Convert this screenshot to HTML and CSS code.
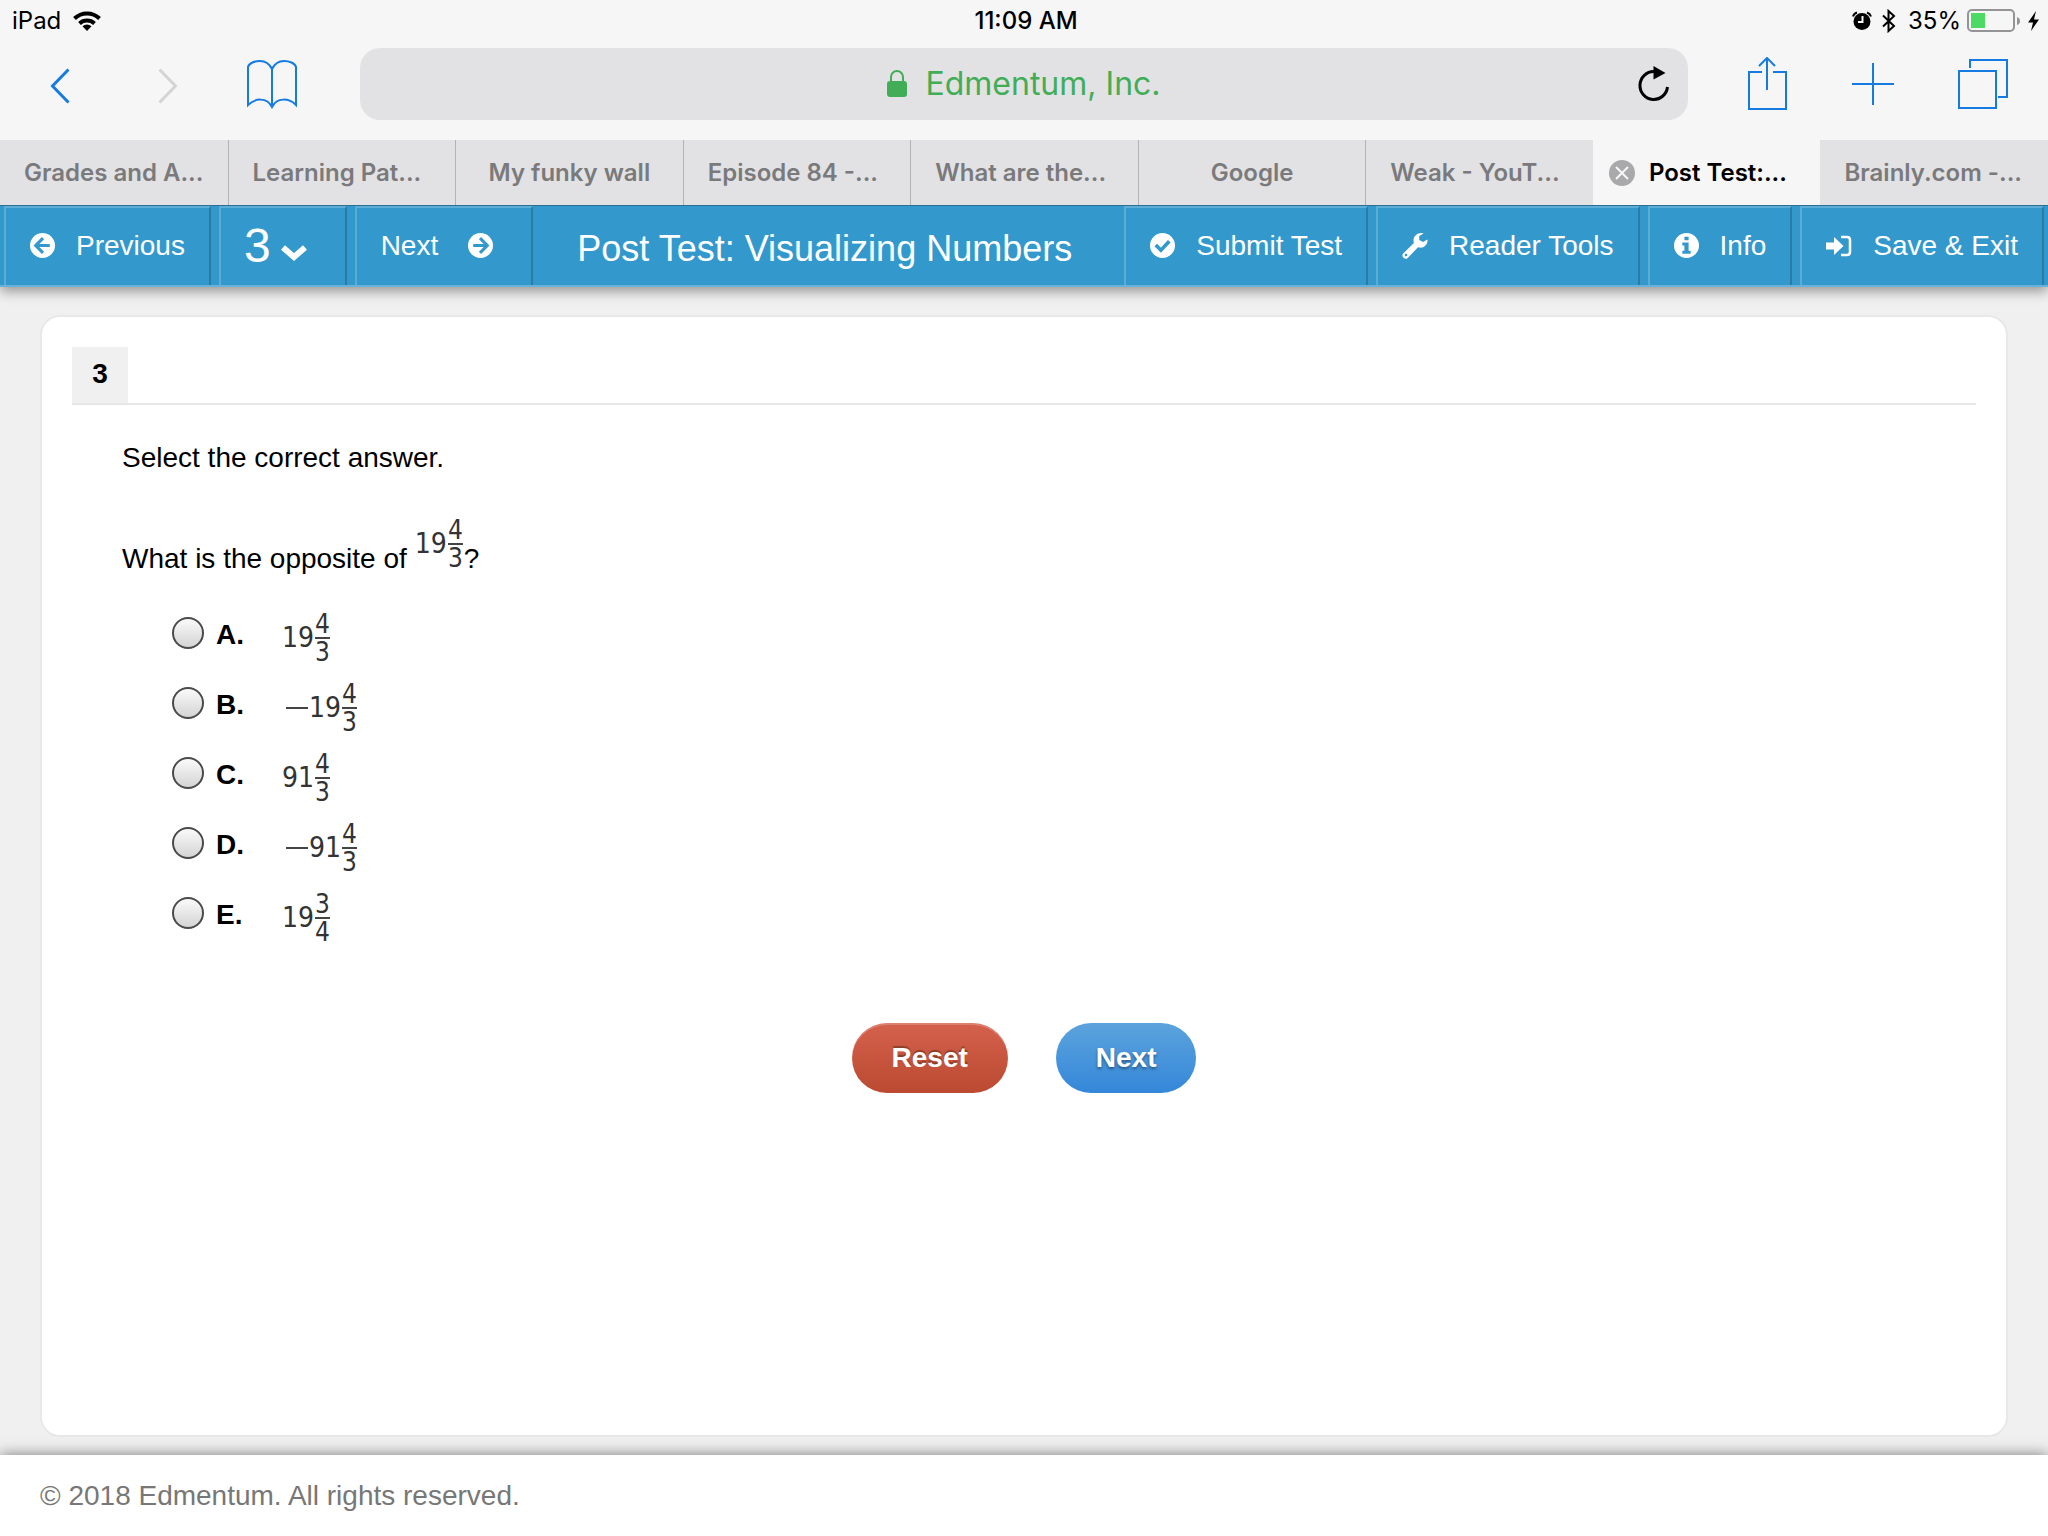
FILE: index.html
```html
<!DOCTYPE html>
<html lang="en">
<head>
<meta charset="utf-8">
<title>Post Test: Visualizing Numbers</title>
<link rel="stylesheet" href="styles.css">
</head>
<body>
<header class="browser">
  <div class="status">
    <div class="status-side">
      <span>iPad</span>
      <svg class="wifi" width="28" height="20" viewBox="0 0 28 20" fill="none" stroke="#000" stroke-width="4"><path d="M1.500 7.500a18 18 0 0 1 25 0"/><path d="M6.500 12.500a11 11 0 0 1 15 0"/><path d="M14 20l-4.500-4.700a6.500 6.500 0 0 1 9 0z" fill="#000" stroke="none"/></svg>
    </div>
    <time class="clock">11:09 AM</time>
    <div class="status-side status-end">
      <svg width="20" height="20" viewBox="0 0 20 20"><circle cx="10" cy="10.500" r="8.500"/><path d="M1 5.500a6 6 0 0 1 4-4M15 1.500a6 6 0 0 1 4 4" fill="none" stroke="#000" stroke-width="2"/><path d="M10.500 5v6H6" fill="none" stroke="#f6f6f6" stroke-width="2"/></svg>
      <svg class="bluetooth" width="14" height="24" viewBox="0 0 14 24" fill="none" stroke="#000" stroke-width="2"><path d="M1 6.500l11 10.500-5.500 5V2L12 7 1 17.500"/></svg>
      <span>35%</span>
      <svg width="54" height="24" viewBox="0 0 54 24"><rect x="1" y="1" width="46" height="21" rx="4" fill="none" stroke="#949497" stroke-width="2"/><rect x="4" y="4" width="14" height="15" fill="#4cd964"/><path d="M50 8q3 1 3 4t-3 4z" fill="#949497"/></svg>
      <svg width="13" height="20" viewBox="0 0 13 20"><path d="M9 0L1 11.500h5L4 20l8-11.500H7z"/></svg>
    </div>
  </div>
  <div class="toolbar">
    <div class="tools tools-start">
      <button class="tool chevron" aria-label="Back"><svg width="20" height="36" viewBox="0 0 20 36" fill="none" stroke="#157be0" stroke-width="3"><path d="M18.500 1.500L2.500 18l16 16.500"/></svg></button>
      <button class="tool chevron" aria-label="Forward"><svg width="20" height="36" viewBox="0 0 20 36" fill="none" stroke="#d4d4d6" stroke-width="3"><path d="M1.500 1.500L17.500 18l-16 16.500"/></svg></button>
      <button class="tool" aria-label="Bookmarks"><svg width="52" height="50" viewBox="0 0 52 50" fill="none" stroke="#157be0" stroke-width="2"><path d="M26 10v38M26 10C23 4 19 2 14 2S3 4 2 8v38c7-7 19-8 24 2 5-10 17-9 24-2V8c-1-4-7-6-12-6s-9 2-12 8z"/></svg></button>
    </div>
    <div class="address">
      <svg width="20" height="28" viewBox="0 0 20 28"><rect y="11" width="20" height="16" rx="3" fill="#42ad57"/><path d="M4 12V7a6 6 0 0 1 12 0v5" fill="none" stroke="#42ad57" stroke-width="2"/></svg>
      <input class="address-text" type="text" value="Edmentum, Inc." aria-label="Address">
      <button class="tool reload" aria-label="Reload"><svg width="32" height="36" viewBox="0 0 32 36"><path d="M16 5.500A13.800 14 0 1 0 29.500 21" fill="none" stroke="#000" stroke-width="3"/><path d="M15.500 0v13.500L27.500 7z"/></svg></button>
    </div>
    <div class="tools tools-end">
      <button class="tool" aria-label="Share"><svg width="40" height="54" viewBox="0 0 40 54" fill="none" stroke="#157be0" stroke-width="2"><path d="M14 15H1v37h37V15H25M19 33V1M11 9l8-8 8 8"/></svg></button>
      <button class="tool" aria-label="New tab"><svg width="42" height="42" viewBox="0 0 42 42" fill="none" stroke="#157be0" stroke-width="2"><path d="M0 21h42M21 0v42"/></svg></button>
      <button class="tool" aria-label="Show tabs"><svg width="50" height="50" viewBox="0 0 50 50" fill="none" stroke="#157be0" stroke-width="2"><rect x="1" y="12" width="37" height="37"/><path d="M12 9V1h37v37h-9"/></svg></button>
    </div>
  </div>
  <nav class="tabs" aria-label="Open tabs">
    <button class="tab tab-long">Grades and A...</button>
    <button class="tab tab-long">Learning Pat...</button>
    <button class="tab">My funky wall</button>
    <button class="tab tab-long">Episode 84 -...</button>
    <button class="tab tab-long">What are the...</button>
    <button class="tab">Google</button>
    <button class="tab tab-long">Weak - YouT...</button>
    <button class="tab tab-active"><svg width="26" height="26" viewBox="0 0 26 26"><circle cx="13" cy="13" r="13" fill="#a9a9ab"/><path d="M7 7l12 12M19 7L7 19" stroke="#f6f6f6" stroke-width="2"/></svg>Post Test:...</button>
    <button class="tab tab-long">Brainly.com -...</button>
  </nav>
</header>

<nav class="testbar" aria-label="Test">
  <button class="bar-button"><svg width="25" height="25" viewBox="0 0 24 24"><circle cx="12" cy="12" r="12" fill="#fff"/><path d="M12.500 5L5.500 12l7 7M6 12h13" fill="none" stroke="#39c" stroke-width="3"/></svg>Previous</button>
  <button class="bar-button bar-page">3<svg width="26" height="16" viewBox="0 0 26 16" fill="none" stroke="#fff" stroke-width="6"><path d="M2 2.500l11 9.500 11-9.500"/></svg></button>
  <button class="bar-button bar-next">Next<svg width="25" height="25" viewBox="0 0 24 24"><circle cx="12" cy="12" r="12" fill="#fff"/><path d="M11.500 5l7 7-7 7M18 12H5" fill="none" stroke="#39c" stroke-width="3"/></svg></button>
  <h1 class="bar-title">Post Test: Visualizing Numbers</h1>
  <button class="bar-button"><svg width="25" height="25" viewBox="0 0 24 24"><circle cx="12" cy="12" r="12" fill="#fff"/><path d="M5.500 11.500l5 5 8-8.500" fill="none" stroke="#39c" stroke-width="3.500"/></svg>Submit Test</button>
  <button class="bar-button"><svg width="26" height="26" viewBox="0 0 26 26"><path d="M25.500 6.500l-4.500 2.600-3.800-2.200V3L21.500.500C17 -1 12 2 11.500 7c0 1 0 2 .400 3L1.200 20.500a3.200 3.200 0 0 0 4.500 4.500L16 14.300c5 1.700 10-2 9.500-7.800z" fill="#fff"/><circle cx="4" cy="22" r="1.300" fill="#39c"/></svg>Reader Tools</button>
  <button class="bar-button"><svg width="25" height="25" viewBox="0 0 24 24"><circle cx="12" cy="12" r="12" fill="#fff"/><path d="M10 3.500h4v3.500h-4zM8 9h6v8h2v3H8v-3h2v-5H8z" fill="#39c"/></svg>Info</button>
  <button class="bar-button"><svg width="26" height="22" viewBox="0 0 26 22"><path d="M0 7.500h8V2l9.500 9L8 20v-5.500H0z" fill="#fff"/><path d="M15 2h6q3 0 3 3v12q0 3-3 3h-6" fill="none" stroke="#fff" stroke-width="2.500"/></svg>Save &amp; Exit</button>
</nav>

<main class="page">
  <section class="card">
    <div class="question-head"><h2 class="question-number">3</h2></div>
    <form class="question">
      <p class="prompt">Select the correct answer.</p>
      <p class="prompt prompt-math"><span>What is the opposite of</span><span class="mixed mixed-raised">19<span class="fraction"><span>4</span><span class="denominator">3</span></span></span><span>?</span></p>
      <div class="choices">
        <label class="choice"><input class="radio" type="radio" name="answer"><b class="letter">A.</b><span class="mixed">19<span class="fraction"><span>4</span><span class="denominator">3</span></span></span></label>
        <label class="choice"><input class="radio" type="radio" name="answer"><b class="letter">B.</b><span class="mixed"><span class="minus"></span>19<span class="fraction"><span>4</span><span class="denominator">3</span></span></span></label>
        <label class="choice"><input class="radio" type="radio" name="answer"><b class="letter">C.</b><span class="mixed">91<span class="fraction"><span>4</span><span class="denominator">3</span></span></span></label>
        <label class="choice"><input class="radio" type="radio" name="answer"><b class="letter">D.</b><span class="mixed"><span class="minus"></span>91<span class="fraction"><span>4</span><span class="denominator">3</span></span></span></label>
        <label class="choice"><input class="radio" type="radio" name="answer"><b class="letter">E.</b><span class="mixed">19<span class="fraction"><span>3</span><span class="denominator">4</span></span></span></label>
      </div>
    </form>
    <div class="actions">
      <button class="pill pill-red">Reset</button>
      <button class="pill pill-blue">Next</button>
    </div>
  </section>
</main>
<footer class="footer">© 2018 Edmentum. All rights reserved.</footer>
</body>
</html>
```
FILE: styles.css
```css
* { box-sizing: border-box; }

body {
  display: flex;
  flex-direction: column;
  min-height: 100vh;
  margin: 0;
  background: #f0f0f0;
  color: #000;
  font: 28px/32px "Liberation Sans", Arial, sans-serif;
}

button, input {
  margin: 0;
  padding: 0;
  border: 0;
  background: none;
  color: inherit;
  font: inherit;
}

h1, h2, p { margin: 0; }
svg { display: block; flex: none; }

/* Browser chrome */
.browser {
  position: relative;
  z-index: 1;
  background: #f6f6f6;
  font-family: Inter, sans-serif;
}

.status {
  display: grid;
  grid-template-columns: 1fr auto 1fr;
  align-items: center;
  height: 40px;
  padding: 2px 8px 0 12px;
  font-size: 24px;
}

.status-side { display: flex; align-items: center; gap: 12px; }
.status-end { justify-content: flex-end; gap: 6px; }
.bluetooth { margin: 0 6px 0 4px; }
.clock { font-weight: 500; }

.toolbar {
  display: flex;
  align-items: center;
  height: 100px;
  padding: 0 40px 12px 50px;
}

.tools { display: flex; align-items: center; }
.tools-start { gap: 88px; padding-right: 62px; }
.tools-start .tool:last-child { margin-left: -20px; }
.tools-end { gap: 64px; padding-left: 60px; }
.chevron { padding-top: 4px; }

.address {
  display: flex;
  flex: 1;
  align-items: center;
  justify-content: center;
  gap: 18px;
  position: relative;
  height: 72px;
  border-radius: 20px;
  background: #e2e2e4;
}

.address-text {
  field-sizing: content;
  color: #42ad57;
  font-size: 32px;
  line-height: 40px;
}

.reload { position: absolute; right: 18px; }

.tabs { display: grid; grid-template-columns: repeat(9, 1fr); height: 65px; }

.tab {
  display: flex;
  align-items: center;
  justify-content: center;
  gap: 14px;
  border-left: 1px solid #b3b3b6;
  background: #e2e2e4;
  color: #7a7a7c;
  font-size: 24px;
  font-weight: 600;
  white-space: nowrap;
}

.tab-long { justify-content: flex-start; padding-left: 24px; }
.tab:first-child, .tab-active, .tab-active + .tab { border-left: 0; }
.tab-active { justify-content: flex-start; padding-left: 16px; background: #f6f6f6; color: #000; }

/* Test navigation */
.testbar {
  display: flex;
  gap: 8px;
  position: relative;
  height: 82px;
  padding: 0 4px;
  border-top: 1px solid #2a7094;
  border-bottom: 2px solid #66b2d9;
  background: #39c;
  box-shadow: 0 4px 12px rgba(0, 0, 0, 0.4);
  color: #fff;
}

.bar-button {
  display: flex;
  align-items: center;
  gap: 21px;
  padding: 0 24px 2px;
  border: solid;
  border-width: 2px 2px 0;
  border-color: #5badd6 #2a7ca5 #39c #5badd6;
  white-space: nowrap;
}

.bar-page { gap: 10px; padding-left: 23px; padding-right: 38px; font-size: 48px; }
.bar-page svg { margin-top: 14px; }
.bar-next { gap: 30px; padding-right: 38px; }

.bar-title {
  flex: 1;
  align-self: center;
  margin: 0 -8px;
  padding: 6px 8px 0 0;
  font-size: 36px;
  font-weight: 400;
  line-height: 40px;
  text-align: center;
}

/* Question */
.page { display: flex; flex: 1; padding: 28px 40px 18px; }

.card {
  flex: 1;
  padding: 30px;
  border: 2px solid #e8e8e8;
  border-radius: 20px;
  background: #fff;
}

.question-head { border-bottom: 2px solid #e6e6e6; }

.question-number {
  width: 56px;
  padding-bottom: 2px;
  background: #f0f0f0;
  font-size: 28px;
  line-height: 54px;
  text-align: center;
}

.question { padding: 37px 50px 0; }
.prompt-math { display: flex; align-items: flex-end; margin-top: 43px; }
.choices { padding: 28px 0 0 50px; }

.choice { display: flex; align-items: center; height: 70px; }

.radio {
  appearance: none;
  width: 32px;
  height: 32px;
  margin: 0 12px 10px 0;
  border: 2px solid #4a4a4a;
  border-radius: 50%;
  background: linear-gradient(#fafafa, #d4d4d4);
}

.letter { width: 66px; padding-bottom: 6px; }

.mixed {
  display: inline-flex;
  align-items: center;
  gap: 1px;
  color: #333;
  font: 28px/32px "DejaVu Sans Condensed", "DejaVu Sans", sans-serif;
}

.mixed-raised { margin: 0 1px 4px 8px; }

.minus { width: 22px; height: 2px; margin-left: 4px; background: #444; }

.fraction {
  display: inline-flex;
  flex-direction: column;
  font-size: 26px;
  line-height: 26px;
  text-align: center;
}

.denominator { border-top: 2px solid #444; }

.actions { display: flex; justify-content: center; gap: 48px; padding-top: 70px; }

.pill {
  height: 70px;
  padding: 0 40px;
  border-radius: 35px;
  color: #fff;
  font-weight: 700;
}

.pill-red {
  background: linear-gradient(#d4614c, #bb4a31);
  box-shadow: inset 0 2px 0 rgba(255, 255, 255, 0.2);
  text-shadow: 0 -2px 1px rgba(0, 0, 0, 0.3);
}

.pill-blue {
  background: linear-gradient(#5ca3dd, #3487d9);
  text-shadow: 0 2px 3px rgba(0, 0, 0, 0.4);
}

.footer {
  position: relative;
  padding: 25px 40px 24px;
  background: #fff;
  box-shadow: 0 0 14px rgba(0, 0, 0, 0.5);
  color: #777;
}
```
